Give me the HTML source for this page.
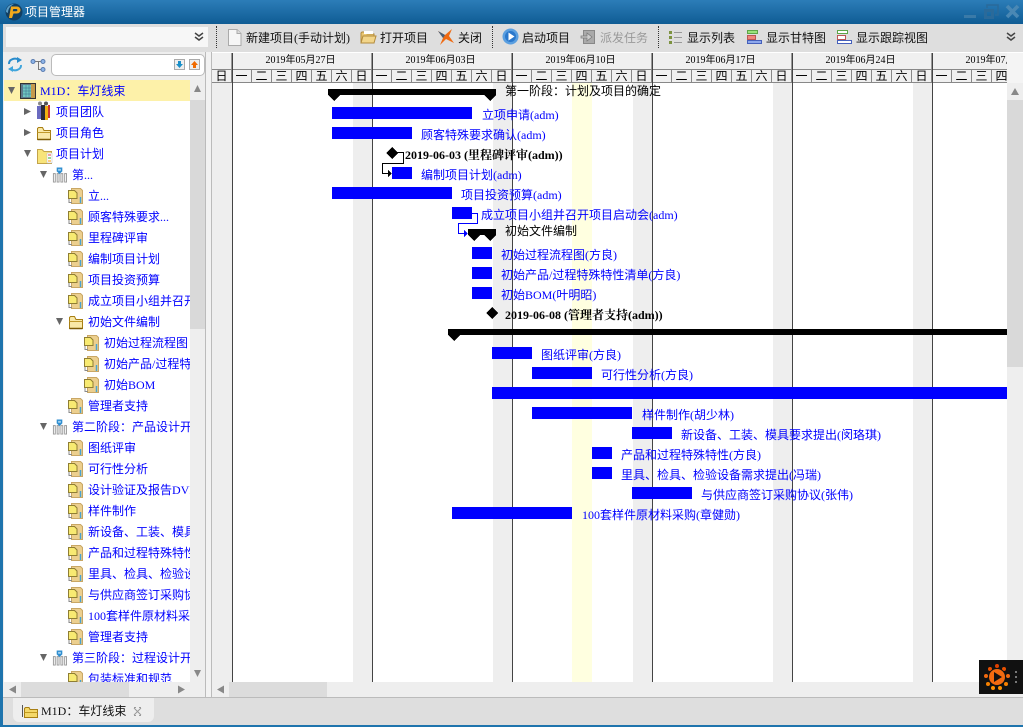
<!DOCTYPE html>
<html><head><meta charset="utf-8"><style>
html,body{margin:0;padding:0;width:1023px;height:727px;overflow:hidden;background:#dedede}
body{position:relative;font:12px/20px "Liberation Serif","WenQuanYi Zen Hei","Noto Sans CJK SC",serif;color:#000}
div,svg,span{position:absolute;white-space:nowrap}
.tb{top:28px;color:#111}
.t{height:21px;line-height:23px;color:#00f}
.b{background:#00f;height:12px}
.g{color:#00f;height:20px}
.k{height:20px;color:#000}
.m{height:20px;font-weight:bold;font-family:"Liberation Serif","Noto Serif CJK SC",serif;color:#000}
.w{background:#eee;top:83px;height:599px;width:20px}
.v{background:#444;top:53px;height:629px;width:1px}
.d{position:static;display:block;float:left;width:19px;height:13px;border-right:1px solid #888;line-height:13px;text-align:center}
.h{float:left;position:static;display:block;width:139px;height:16px;border-right:1px solid #999;text-align:center;font-size:10px;line-height:16px;text-indent:-2px}
</style></head><body>
<svg width="0" height="0" style="position:absolute">
<defs>
<symbol id="doc" viewBox="0 0 15 16"><path d="M3.500.5H12.500L14.500 2.500V15.500H3.500Z" fill="#eccf8e" stroke="#c9a765"/><path d="M.5 2.500H6.500L9 5V10.500H.5Z" fill="#f8ea72" stroke="#8f7e34"/><path d="M1 11V14.500H4" fill="none" stroke="#8a8a8a"/><path d="M12.500 9V15" stroke="#4aa2cf" stroke-width="1.5"/></symbol>
<symbol id="fold" viewBox="0 0 16 16"><path d="M1.500 3.500V14.500H14.500V5.500H8L6.500 2.500H2.500Z" fill="#f9e9a8" stroke="#a87f14"/><path d="M1.500 7.500H14.500" stroke="#c09a2c"/><path d="M1.500 14.500H14.500" stroke="#7d5c08" stroke-width="1.5"/></symbol>
<symbol id="ph" viewBox="0 0 16 16"><path d="M1.500 6.500H3.500V15.500H1.500ZM5.500 6.500H7.500V15.500H5.500ZM9.500 6.500H11.500V15.500H9.500ZM13.500 6.500H15.500V15.500H13.500Z" fill="#fff" stroke="#999"/><path d="M5 0H11V4L8 7L5 4Z" fill="#2f8ed0"/><path d="M6.500 1.500H9.500V3.500H6.500Z" fill="#9fd0f0"/></symbol>
</defs></svg>

<!-- title bar -->
<div style="left:0;top:0;width:1023px;height:24px;background:linear-gradient(#2c7db8,#0f5c94)"></div>
<svg style="left:5px;top:3px" width="18" height="18" viewBox="0 0 18 18"><circle cx="9" cy="9" r="8.500" fill="#123f63"/><path d="M1 9A8 8 0 0 1 9 1C5 3 3 6 3 10Z" fill="#5a9ec8"/><path d="M6 3.500H12A3.500 3.500 0 0 1 12 10.500H8.500L7 15H4Z" fill="#f5a91a"/><path d="M8.300 6H11.500A1.200 1.200 0 0 1 11.500 8.300H7.700Z" fill="#123f63"/></svg>
<div style="left:25px;top:2px;color:#fff;line-height:20px">项目管理器</div>
<svg style="left:960px;top:3px" width="62" height="18" viewBox="0 0 62 18"><path d="M4 12H16V15H4Z" fill="#3a7aa8"/><path d="M24 6H34V16H24Z M27 9V13H31V9Z" fill="#2a6a9a" fill-rule="evenodd"/><path d="M27 5V2H38V12H35" fill="none" stroke="#2a6a9a" stroke-width="1.6"/><path d="M47 3L58 14M58 3L47 14" stroke="#4a88b4" stroke-width="3.600"/></svg>

<!-- toolbar -->
<div style="left:0;top:24px;width:1023px;height:28px;background:#dedede"></div>
<div style="left:6px;top:27px;width:202px;height:20px;background:#f7f7f7"></div>
<svg style="left:193px;top:32px" width="12" height="10" viewBox="0 0 12 10"><path d="M2 1L6 4L10 1M2 5L6 8L10 5" fill="none" stroke="#444" stroke-width="1.500"/></svg>
<svg style="left:1005px;top:32px" width="12" height="10" viewBox="0 0 12 10"><path d="M2 1L6 4L10 1M2 5L6 8L10 5" fill="none" stroke="#444" stroke-width="1.500"/></svg>
<div style="left:216px;top:26px;width:0;height:22px;border-left:1px dotted #333"></div>
<div style="left:492px;top:26px;width:0;height:22px;border-left:1px dotted #333"></div>
<div style="left:658px;top:26px;width:0;height:22px;border-left:1px dotted #333"></div>

<svg style="left:227px;top:28px" width="15" height="18" viewBox="0 0 15 18"><path d="M1.500 1.500H10L14 5.500V17.500H1.500Z" fill="#f6f6f6" stroke="#aaa"/><path d="M10 1.500V5.500H14" fill="#ddd" stroke="#aaa"/></svg>
<div class="tb" style="left:246px">新建项目(手动计划)</div>
<svg style="left:359px;top:29px" width="18" height="16" viewBox="0 0 18 16"><path d="M2 4V14H15V5H8L7 3H3Z" fill="#eac774" stroke="#b38b3c"/><path d="M5 2H14V5H5Z" fill="#fff"/><path d="M2 14L4 7H17L15 14Z" fill="#f2d58a" stroke="#b38b3c"/></svg>
<div class="tb" style="left:380px">打开项目</div>
<svg style="left:437px;top:28px" width="18" height="18" viewBox="0 0 18 18"><path d="M1 3L8 7L15 1L12 8L17 15L9 11L3 17L6 10Z" fill="#ef6a12"/><path d="M1 3L8 7L6 10Z" fill="#44607c"/></svg>
<div class="tb" style="left:458px">关闭</div>
<svg style="left:502px;top:28px" width="17" height="17" viewBox="0 0 17 17"><circle cx="8.500" cy="8.500" r="8" fill="#5a9fe0"/><circle cx="8.500" cy="8.500" r="5.500" fill="#2a78cc"/><path d="M6.500 4.500L12.500 8.500L6.500 12.500Z" fill="#fff"/></svg>
<div class="tb" style="left:522px">启动项目</div>
<svg style="left:580px;top:28px" width="17" height="17" viewBox="0 0 17 17"><path d="M3.500 2.500H14.500V15.500H3.500Z" fill="#aaa" stroke="#888"/><path d="M1 8H7V5L12 9L7 13V10H1Z" fill="#ccc" stroke="#777" stroke-width=".7"/></svg>
<div class="tb" style="left:600px;color:#999">派发任务</div>
<svg style="left:668px;top:30px" width="15" height="15" viewBox="0 0 15 15"><path d="M1 1H4V4H1ZM1 6H4V9H1ZM1 11H4V14H1Z" fill="#7d9340"/><path d="M6 2.500H14M6 7.500H14M6 12.500H14" stroke="#999"/></svg>
<div class="tb" style="left:687px">显示列表</div>
<svg style="left:747px;top:30px" width="15" height="15" viewBox="0 0 15 15"><path d="M.5.500H10.500V3.500H.5Z" fill="#9be27c" stroke="#5da548"/><path d="M.5 5.500H8.500V9.500H.5Z" fill="#f0857c" stroke="#b55"/><path d="M.5 10.500H14.500V13.500H.5Z" fill="#8ea8ec" stroke="#4660bb"/></svg>
<div class="tb" style="left:766px">显示甘特图</div>
<svg style="left:837px;top:30px" width="15" height="15" viewBox="0 0 15 15"><path d="M.5.500H10.500V3.500H.5Z" fill="#fff" stroke="#5da548"/><path d="M.5 5.500H8.500V9.500H.5Z" fill="#fff" stroke="#b55"/><path d="M.5 10.500H14.500V13.500H.5Z" fill="#fff" stroke="#4660bb"/></svg>
<div class="tb" style="left:856px">显示跟踪视图</div>

<!-- gap between panels -->
<div style="left:206px;top:52px;width:5px;height:646px;background:#f2f2f2"></div>

<!-- left panel -->
<div style="left:3px;top:52px;width:202px;height:645px;background:#eee;border-right:1px solid #bbb;border-bottom:1px solid #bbb"></div>
<svg style="left:7px;top:56px" width="16" height="17" viewBox="0 0 16 17"><path d="M2 8A6 5 0 0 1 12 4" fill="none" stroke="#2a8ccc" stroke-width="2"/><path d="M10 1L15 4L10 7Z" fill="#2a8ccc"/><path d="M14 9A6 5 0 0 1 4 13" fill="none" stroke="#3fa5dc" stroke-width="2"/><path d="M6 10L1 13L6 16Z" fill="#3fa5dc"/></svg>
<svg style="left:30px;top:57px" width="17" height="16" viewBox="0 0 17 16"><path d="M4 4.500H12M8.500 4.500V12.500H12" fill="none" stroke="#777"/><circle cx="3" cy="4.500" r="2" fill="#8db4e8" stroke="#5a7cb0"/><circle cx="13" cy="4.500" r="2" fill="#8db4e8" stroke="#5a7cb0"/><circle cx="13" cy="12.500" r="2" fill="#8db4e8" stroke="#5a7cb0"/></svg>
<div style="left:51px;top:54px;width:152px;height:20px;background:#fff;border:1px solid #bbb;border-radius:5px"></div>
<svg style="left:174px;top:59px" width="28" height="12" viewBox="0 0 28 12"><rect x=".5" y=".5" width="10" height="10" fill="#eee" stroke="#aaa"/><path d="M4 2H7V5H9L5.500 9L2 5H4Z" fill="#1a8fc8"/><rect x="15.500" y=".5" width="10" height="10" fill="#eee" stroke="#aaa"/><path d="M19 9H22V6H24L20.500 2L17 6H19Z" fill="#f06a00"/></svg>

<!-- tree -->
<div style="left:4px;top:80px;width:186px;height:602px;background:#fff;overflow:hidden" id="tree">
<div style="left:0;top:0;width:186px;height:21px;background:#fdf1a9"></div>
<svg style="left:0;top:0" width="186" height="602" viewBox="4 80 186 602" fill="#666">
<path d="M8 87H15L11.500 94Z"/><path d="M24 108V115L31 111.500Z"/><path d="M24 129V136L31 132.500Z"/><path d="M24 150H31L27.500 157Z"/><path d="M40 171H47L43.500 178Z"/><path d="M56 318H63L59.500 325Z"/><path d="M40 423H47L43.500 430Z"/><path d="M40 654H47L43.500 661Z"/>
<rect x="20.500" y="83.500" width="15" height="15" fill="#5c7a8c" stroke="#333"/><rect x="23" y="85" width="8" height="12" fill="#6fc7c0"/><path d="M23 88H31M23 91H31M23 94H31M26 85V97M29 85V97" stroke="#3d6a8c" stroke-width=".5"/><rect x="31" y="84" width="4" height="14" fill="#c59b4c"/>
<rect x="37" y="106" width="4" height="13" fill="#6a6ac0"/><rect x="41" y="105" width="4" height="15" fill="#2a2a3a"/><rect x="45" y="106" width="3" height="14" fill="#f0b010"/><rect x="48" y="105" width="2" height="13" fill="#c33"/><circle cx="40" cy="103.500" r="2" fill="#888"/><circle cx="46" cy="103.500" r="2" fill="#555"/>
<use href="#fold" x="36" y="125" width="16" height="16"/>
<path d="M37.500 149.500H42L44 151.500H51.500V163.500H37.500Z" fill="#f8e47a" stroke="#c3a34a"/><path d="M47 153H52V163H47Z" fill="#fff" stroke="#bbb" stroke-width=".5"/><path d="M48 155H51" stroke="#d44"/><path d="M48 158H51" stroke="#3a3"/><path d="M48 161H51" stroke="#f90"/>
<use href="#ph" x="52" y="167" width="15" height="16"/><use href="#ph" x="52" y="419" width="15" height="16"/><use href="#ph" x="52" y="650" width="15" height="16"/>
<use href="#doc" x="68" y="188" width="15" height="16"/><use href="#doc" x="68" y="209" width="15" height="16"/><use href="#doc" x="68" y="230" width="15" height="16"/><use href="#doc" x="68" y="251" width="15" height="16"/><use href="#doc" x="68" y="272" width="15" height="16"/><use href="#doc" x="68" y="293" width="15" height="16"/>
<use href="#fold" x="68" y="314" width="16" height="16"/>
<use href="#doc" x="84" y="335" width="15" height="16"/><use href="#doc" x="84" y="356" width="15" height="16"/><use href="#doc" x="84" y="377" width="15" height="16"/>
<use href="#doc" x="68" y="398" width="15" height="16"/><use href="#doc" x="68" y="440" width="15" height="16"/><use href="#doc" x="68" y="461" width="15" height="16"/><use href="#doc" x="68" y="482" width="15" height="16"/><use href="#doc" x="68" y="503" width="15" height="16"/><use href="#doc" x="68" y="524" width="15" height="16"/><use href="#doc" x="68" y="545" width="15" height="16"/><use href="#doc" x="68" y="566" width="15" height="16"/><use href="#doc" x="68" y="587" width="15" height="16"/><use href="#doc" x="68" y="608" width="15" height="16"/><use href="#doc" x="68" y="629" width="15" height="16"/><use href="#doc" x="68" y="671" width="15" height="16"/>
</svg>
<div class="t" style="left:36px;top:0">M1D：车灯线束</div>
<div class="t" style="left:52px;top:21px">项目团队</div>
<div class="t" style="left:52px;top:42px">项目角色</div>
<div class="t" style="left:52px;top:63px">项目计划</div>
<div class="t" style="left:68px;top:84px">第...</div>
<div class="t" style="left:84px;top:105px">立...</div>
<div class="t" style="left:84px;top:126px">顾客特殊要求...</div>
<div class="t" style="left:84px;top:147px">里程碑评审</div>
<div class="t" style="left:84px;top:168px">编制项目计划</div>
<div class="t" style="left:84px;top:189px">项目投资预算</div>
<div class="t" style="left:84px;top:210px">成立项目小组并召开项目启动会</div>
<div class="t" style="left:84px;top:231px">初始文件编制</div>
<div class="t" style="left:100px;top:252px">初始过程流程图</div>
<div class="t" style="left:100px;top:273px">初始产品/过程特殊特性清单</div>
<div class="t" style="left:100px;top:294px">初始BOM</div>
<div class="t" style="left:84px;top:315px">管理者支持</div>
<div class="t" style="left:68px;top:336px">第二阶段：产品设计开发</div>
<div class="t" style="left:84px;top:357px">图纸评审</div>
<div class="t" style="left:84px;top:378px">可行性分析</div>
<div class="t" style="left:84px;top:399px">设计验证及报告DVP</div>
<div class="t" style="left:84px;top:420px">样件制作</div>
<div class="t" style="left:84px;top:441px">新设备、工装、模具要求提出</div>
<div class="t" style="left:84px;top:462px">产品和过程特殊特性</div>
<div class="t" style="left:84px;top:483px">里具、检具、检验设备需求提出</div>
<div class="t" style="left:84px;top:504px">与供应商签订采购协议</div>
<div class="t" style="left:84px;top:525px">100套样件原材料采购</div>
<div class="t" style="left:84px;top:546px">管理者支持</div>
<div class="t" style="left:68px;top:567px">第三阶段：过程设计开发</div>
<div class="t" style="left:84px;top:588px">包装标准和规范</div>
</div>
<!-- tree scrollbars -->
<div style="left:190px;top:80px;width:15px;height:602px;background:#eee"></div>
<div style="left:190px;top:100px;width:15px;height:229px;background:#d9d9d9"></div>
<svg style="left:190px;top:80px" width="15" height="602" viewBox="0 0 15 602" fill="#888"><path d="M4 12L7.500 5L11 12Z"/><path d="M4 590L7.500 597L11 590Z"/></svg>
<div style="left:3px;top:682px;width:202px;height:15px;background:#eee"></div>
<div style="left:21px;top:682px;width:108px;height:15px;background:#dcdcdc"></div>
<svg style="left:3px;top:682px" width="187" height="15" viewBox="0 0 187 15" fill="#888"><path d="M6 7.500L13 3.500V11.500Z"/><path d="M182 7.500L175 3.500V11.500Z"/></svg>

<!-- right panel -->
<div style="left:211px;top:52px;width:812px;height:646px;background:#fff;border-left:1px solid #bbb"></div>
<div style="left:212px;top:53px;width:795px;height:30px;background:#f0f0f0;overflow:hidden">
<div style="left:0;top:0;width:1000px;height:16px;border-bottom:1px solid #888">
<span class="h" style="width:19px"></span><span class="h">2019年05月27日</span><span class="h">2019年06月03日</span><span class="h">2019年06月10日</span><span class="h">2019年06月17日</span><span class="h">2019年06月24日</span><span class="h">2019年07月01日</span>
</div>
<div style="left:0;top:17px;width:1000px;height:12px;border-bottom:1px solid #888;overflow:hidden">
<span class="d">日</span><span class="d">一</span><span class="d">二</span><span class="d">三</span><span class="d">四</span><span class="d">五</span><span class="d">六</span><span class="d">日</span><span class="d">一</span><span class="d">二</span><span class="d">三</span><span class="d">四</span><span class="d">五</span><span class="d">六</span><span class="d">日</span><span class="d">一</span><span class="d">二</span><span class="d">三</span><span class="d">四</span><span class="d">五</span><span class="d">六</span><span class="d">日</span><span class="d">一</span><span class="d">二</span><span class="d">三</span><span class="d">四</span><span class="d">五</span><span class="d">六</span><span class="d">日</span><span class="d">一</span><span class="d">二</span><span class="d">三</span><span class="d">四</span><span class="d">五</span><span class="d">六</span><span class="d">日</span><span class="d">一</span><span class="d">二</span><span class="d">三</span><span class="d">四</span>
</div>
</div>
<div style="left:1007px;top:53px;width:16px;height:30px;background:#f4f4f4"></div>
<!-- grid -->
<div class="w" style="left:212px"></div><div class="w" style="left:353px;width:19px"></div><div class="w" style="left:493px;width:19px"></div><div class="w" style="left:633px;width:19px"></div><div class="w" style="left:773px;width:19px"></div><div class="w" style="left:913px;width:19px"></div>
<div style="left:572px;top:83px;width:20px;height:599px;background:#ffffe0"></div>
<div class="v" style="left:232px"></div><div class="v" style="left:372px"></div><div class="v" style="left:512px"></div><div class="v" style="left:652px"></div><div class="v" style="left:792px"></div><div class="v" style="left:932px"></div>

<!-- gantt shapes -->
<svg style="left:212px;top:83px" width="795" height="599" viewBox="212 83 795 599" shape-rendering="crispEdges">
<path d="M328 89H496V95L490 101L484 95H340L334 101L328 95Z" fill="#000"/>
<path d="M392 147L398 153L392 159L386 153Z" fill="#000"/>
<path d="M397 152.500H403.500V163.500H382.500V173.500H390" fill="none" stroke="#000"/><path d="M388 170L392 173.500L388 177Z" fill="#000"/>
<path d="M472 213.500H477.500V223.500H458.500V233.500H466" fill="none" stroke="#00f"/><path d="M464 230L468 233.500L464 237Z" fill="#00f"/>
<path d="M468 229H496V235L490 241L484 235H480L474 241L468 235Z" fill="#000"/>
<path d="M492 307L498 313L492 319L486 313Z" fill="#000"/>
<path d="M448 329H1007V335H460L454 341L448 335Z" fill="#000"/>
</svg>
<div class="b" style="left:332px;top:107px;width:140px"></div>
<div class="b" style="left:332px;top:127px;width:80px"></div>
<div class="b" style="left:392px;top:167px;width:20px"></div>
<div class="b" style="left:332px;top:187px;width:120px"></div>
<div class="b" style="left:452px;top:207px;width:20px"></div>
<div class="b" style="left:472px;top:247px;width:20px"></div>
<div class="b" style="left:472px;top:267px;width:20px"></div>
<div class="b" style="left:472px;top:287px;width:20px"></div>
<div class="b" style="left:492px;top:347px;width:40px"></div>
<div class="b" style="left:532px;top:367px;width:60px"></div>
<div class="b" style="left:492px;top:387px;width:515px"></div>
<div class="b" style="left:532px;top:407px;width:100px"></div>
<div class="b" style="left:632px;top:427px;width:40px"></div>
<div class="b" style="left:592px;top:447px;width:20px"></div>
<div class="b" style="left:592px;top:467px;width:20px"></div>
<div class="b" style="left:632px;top:487px;width:60px"></div>
<div class="b" style="left:452px;top:507px;width:120px"></div>

<div class="k" style="left:505px;top:81px">第一阶段：计划及项目的确定</div>
<div class="g" style="left:482px;top:105px">立项申请(adm)</div>
<div class="g" style="left:421px;top:125px">顾客特殊要求确认(adm)</div>
<div class="m" style="left:405px;top:145px">2019-06-03 (里程碑评审(adm))</div>
<div class="g" style="left:421px;top:165px">编制项目计划(adm)</div>
<div class="g" style="left:461px;top:185px">项目投资预算(adm)</div>
<div class="g" style="left:481px;top:205px">成立项目小组并召开项目启动会(adm)</div>
<div class="k" style="left:505px;top:221px">初始文件编制</div>
<div class="g" style="left:501px;top:245px">初始过程流程图(方良)</div>
<div class="g" style="left:501px;top:265px">初始产品/过程特殊特性清单(方良)</div>
<div class="g" style="left:501px;top:285px">初始BOM(叶明昭)</div>
<div class="m" style="left:505px;top:305px">2019-06-08 (管理者支持(adm))</div>
<div class="g" style="left:541px;top:345px">图纸评审(方良)</div>
<div class="g" style="left:601px;top:365px">可行性分析(方良)</div>
<div class="g" style="left:642px;top:405px">样件制作(胡少林)</div>
<div class="g" style="left:681px;top:425px">新设备、工装、模具要求提出(闵珞琪)</div>
<div class="g" style="left:621px;top:445px">产品和过程特殊特性(方良)</div>
<div class="g" style="left:621px;top:465px">里具、检具、检验设备需求提出(冯瑞)</div>
<div class="g" style="left:701px;top:485px">与供应商签订采购协议(张伟)</div>
<div class="g" style="left:582px;top:505px">100套样件原材料采购(章健勋)</div>

<!-- right scrollbars -->
<div style="left:1007px;top:83px;width:16px;height:599px;background:#eee"></div>
<div style="left:1007px;top:100px;width:16px;height:267px;background:#d9d9d9"></div>
<svg style="left:1007px;top:83px" width="16" height="17" viewBox="0 0 16 17" fill="#888"><path d="M4 12L8 5L12 12Z"/></svg>
<div style="left:212px;top:682px;width:811px;height:15px;background:#eee"></div>
<div style="left:229px;top:682px;width:98px;height:15px;background:#dcdcdc"></div>
<svg style="left:212px;top:682px" width="17" height="15" viewBox="0 0 17 15" fill="#888"><path d="M5 7.500L12 3.500V11.500Z"/></svg>

<!-- floating widget -->
<div style="left:979px;top:660px;width:44px;height:34px;background:#111"></div>
<svg style="left:983px;top:663px" width="38" height="29" viewBox="0 0 38 29">
<g fill="#f06a10"><circle cx="14" cy="3" r="2" fill="#e04000"/><circle cx="21" cy="6" r="2" fill="#e85000"/><circle cx="25" cy="13" r="2"/><circle cx="23" cy="21" r="2" fill="#f58000"/><circle cx="17" cy="25" r="2" fill="#ff9000"/><circle cx="10" cy="25" r="2" fill="#ff9000"/><circle cx="5" cy="21" r="2" fill="#f58000"/><circle cx="3" cy="13" r="2"/><circle cx="7" cy="6" r="2" fill="#e85000"/></g>
<circle cx="14" cy="14" r="8.500" fill="#f26a10" stroke="#111"/><path d="M11 9L19 14L11 19Z" fill="#111"/>
<path d="M32 8H34V10H32ZM32 13H34V15H32ZM32 18H34V20H32Z" fill="#777"/></svg>

<!-- bottom -->
<div style="left:0;top:697px;width:1023px;height:1px;background:#bbb"></div>
<div style="left:13px;top:698px;width:141px;height:24px;background:#eee;border-radius:0 0 6px 6px"></div>
<svg style="left:21px;top:704px" width="17" height="14" viewBox="0 0 17 14"><path d="M1.500 1V13" stroke="#555"/><path d="M3.500 4.500V13.500H16.500V5.500H9L8 3.500H4.500Z" fill="#f4d868" stroke="#a87f14"/><path d="M3.500 8.500H16.500" stroke="#c19a20"/></svg>
<div style="left:41px;top:701px;color:#111">M1D：车灯线束</div>
<svg style="left:133px;top:707px" width="9" height="9" viewBox="0 0 9 9"><path d="M1 1L8 8M8 1L1 8M1 .5H3M6 .5H8M1 8.500H3M6 8.500H8" fill="none" stroke="#999"/></svg>

<!-- window frame -->
<div style="left:0;top:24px;width:3px;height:703px;background:#1e74ad"></div>
<div style="left:0;top:725px;width:1023px;height:2px;background:#1e74ad"></div>
</body></html>
